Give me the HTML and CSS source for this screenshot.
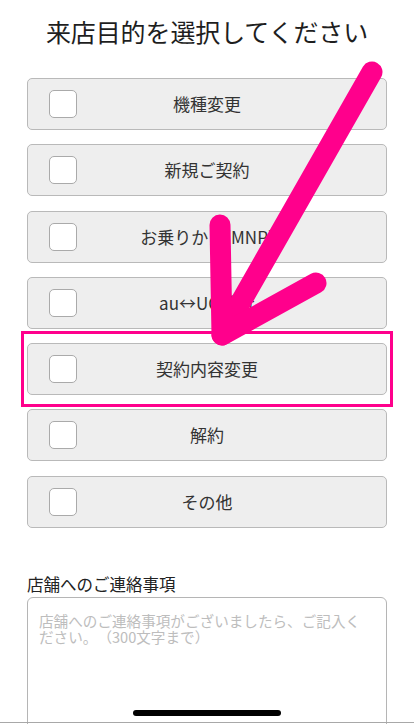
FILE: index.html
```html
<!DOCTYPE html>
<html lang="ja">
<head>
<meta charset="utf-8">
<title>来店目的を選択してください</title>
<link rel="stylesheet" href="styles.css">
</head>
<body>
<main class="page">
  <h1 class="title">来店目的を選択してください</h1>
  <div class="options">
    <label class="option"><span class="box"></span><span class="text">機種変更</span></label>
    <label class="option"><span class="box"></span><span class="text">新規ご契約</span></label>
    <label class="option"><span class="box"></span><span class="text">お乗りかえ(MNP)</span></label>
    <label class="option"><span class="box"></span><span class="text">au↔UQ移行</span></label>
    <label class="option highlight"><span class="box"></span><span class="text">契約内容変更</span></label>
    <label class="option"><span class="box"></span><span class="text">解約</span></label>
    <label class="option"><span class="box"></span><span class="text">その他</span></label>
  </div>
  <div class="field">
    <div class="field-label">店舗へのご連絡事項</div>
    <textarea class="memo" placeholder="店舗へのご連絡事項がございましたら、ご記入ください。（300文字まで）"></textarea>
  </div>
</main>
<svg class="arrow" width="414" height="724" viewBox="0 0 414 724" aria-hidden="true">
  <g fill="none" stroke="#ff008c" stroke-width="21" stroke-linecap="round" stroke-linejoin="round">
    <path d="M372 72 L222 335"/>
    <path d="M220 225 L222 335 L316 283"/>
  </g>
</svg>
<div class="home-indicator"></div>
<div class="bottom-line"></div>
</body>
</html>
```

FILE: styles.css
```css
* { box-sizing: border-box; }
html, body {
  margin: 0;
  padding: 0;
  background: #ffffff;
}
body {
  width: 414px;
  height: 724px;
  overflow: hidden;
  position: relative;
  font-family: "Noto Sans CJK JP", "Noto Sans", sans-serif;
  color: #222;
  text-spacing-trim: space-all;
}
.page {
  padding: 0 27px;
}
.title {
  margin: 16px 0 0;
  font-size: 25px;
  line-height: 30px;
  font-weight: 400;
  text-align: center;
  letter-spacing: -0.1px;
  color: #1e1e1e;
}
.options {
  margin-top: 32px;
  display: flex;
  flex-direction: column;
  gap: 14.3px;
}
.option {
  position: relative;
  height: 52px;
  display: grid;
  grid-template-columns: 1fr auto 1fr;
  align-items: center;
  background: #eeeeee;
  border: 1px solid #b9b9b9;
  border-radius: 5px;
}
.box {
  justify-self: start;
  margin-left: 21px;
  width: 28px;
  height: 28px;
  background: #ffffff;
  border: 1.5px solid #aaaaaa;
  border-radius: 5px;
}
.text {
  grid-column: 2;
  font-size: 17px;
  line-height: 20px;
  color: #333;
  white-space: nowrap;
}
.highlight::before {
  content: "";
  position: absolute;
  top: -13px;
  bottom: -13px;
  left: -7px;
  right: -7px;
  border: 3.3px solid #ff008c;
  pointer-events: none;
}
.field {
  margin-top: 46px;
}
.field-label {
  font-size: 16.5px;
  line-height: 20px;
  color: #222;
}
.memo {
  display: block;
  margin-top: 3px;
  width: 100%;
  height: 160px;
  padding: 15px 22px 15px 11px;
  border: 1px solid #b5b5b5;
  border-radius: 6px;
  font-family: "Noto Sans CJK JP", "Noto Sans", sans-serif;
  font-size: 14.6px;
  line-height: 16.7px;
  resize: none;
  background: #fff;
  text-spacing-trim: space-all;
}
.memo::placeholder {
  color: #bdbdbd;
}
.arrow {
  position: absolute;
  left: 0;
  top: 0;
  pointer-events: none;
}
.home-indicator {
  position: absolute;
  left: 133px;
  top: 710px;
  width: 148px;
  height: 5.5px;
  border-radius: 3px;
  background: #000;
}
.bottom-line {
  position: absolute;
  left: 0;
  right: 0;
  bottom: 1px;
  height: 1px;
  background: #a8a8a8;
}
```
